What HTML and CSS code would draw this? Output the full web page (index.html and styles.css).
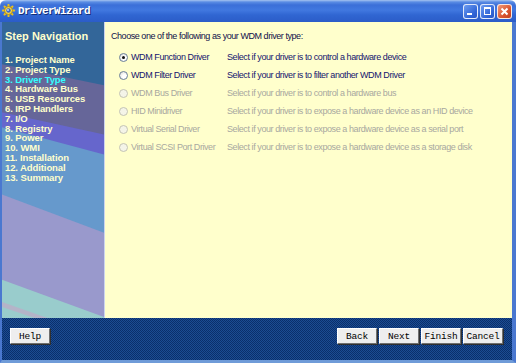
FILE: index.html
```html
<!DOCTYPE html>
<html lang="en">
<head>
    <meta charset="UTF-8">
    <meta name="viewport" content="width=device-width, initial-scale=1.0">
    <title>DriverWizard</title>
    <link rel="stylesheet" href="styles.css">
</head>
<body>
    <div class="window">
        <div class="titlebar">
            <svg class="app-icon" width="13" height="13" viewBox="0 0 13 13">
                <g stroke="#e8c020" stroke-width="2" stroke-linecap="round">
                    <line x1="6.5" y1="0.8" x2="6.5" y2="12.2"/>
                    <line x1="0.8" y1="6.5" x2="12.2" y2="6.5"/>
                    <line x1="2.5" y1="2.5" x2="10.5" y2="10.5"/>
                    <line x1="10.5" y1="2.5" x2="2.5" y2="10.5"/>
                </g>
                <circle cx="6.5" cy="6.5" r="4" fill="#f4d848" stroke="#a88010" stroke-width="0.8"/>
                <circle cx="6.5" cy="6.5" r="2.2" fill="#3a66c8"/>
                <circle cx="6" cy="6" r="0.9" fill="#c8dcff"/>
            </svg>
            <span class="title">DriverWizard</span>
            <div class="controls">
                <span class="ctl ctl-min"></span>
                <span class="ctl ctl-max"></span>
                <span class="ctl ctl-close">
                    <svg width="13" height="13" viewBox="0 0 13 13">
                        <path d="M3.5 3.5 L9.5 9.5 M9.5 3.5 L3.5 9.5" stroke="#fff" stroke-width="2"/>
                    </svg>
                </span>
            </div>
        </div>

        <div class="frame">
            <div class="content">
                <div class="sidebar">
                    <svg class="sidebar-bg" viewBox="0 0 103 295" preserveAspectRatio="none">
                        <rect width="103" height="295" fill="#336699"/>
                        <polygon points="0,42 103,63 103,295 0,295" fill="#666699"/>
                        <polygon points="0,90 103,112 103,295 0,295" fill="#6666cc"/>
                        <polygon points="0,105 103,132 103,295 0,295" fill="#6699cc"/>
                        <polygon points="0,172 103,210 103,295 0,295" fill="#9999cc"/>
                        <polygon points="0,257 103,294 103,295 0,295" fill="#99cccc"/>
                        <polygon points="0,279 46,295 33,295 0,284" fill="#b4b4c8"/>
                    </svg>
                    <h2 class="nav-title">Step Navigation</h2>
                    <ol class="steps">
                        <li>1. Project Name</li>
                        <li>2. Project Type</li>
                        <li class="current">3. Driver Type</li>
                        <li>4. Hardware Bus</li>
                        <li>5. USB Resources</li>
                        <li>6. IRP Handlers</li>
                        <li>7. I/O</li>
                        <li>8. Registry</li>
                        <li>9. Power</li>
                        <li>10. WMI</li>
                        <li>11. Installation</li>
                        <li>12. Additional</li>
                        <li>13. Summary</li>
                    </ol>
                </div>

                <div class="panel">
                    <p class="prompt">Choose one of the following as your WDM driver type:</p>
                    <div class="options">
                        <span class="radio checked"></span>
                        <span class="label">WDM Function Driver</span>
                        <span class="desc">Select if your driver is to control a hardware device</span>

                        <span class="radio"></span>
                        <span class="label">WDM Filter Driver</span>
                        <span class="desc">Select if your driver is to filter another WDM Driver</span>

                        <span class="radio disabled"></span>
                        <span class="label disabled">WDM Bus Driver</span>
                        <span class="desc disabled">Select if your driver is to control a hardware bus</span>

                        <span class="radio disabled"></span>
                        <span class="label disabled">HID Minidriver</span>
                        <span class="desc disabled">Select if your driver is to expose a hardware device as an HID device</span>

                        <span class="radio disabled"></span>
                        <span class="label disabled">Virtual Serial Driver</span>
                        <span class="desc disabled">Select if your driver is to expose a hardware device as a serial port</span>

                        <span class="radio disabled"></span>
                        <span class="label disabled">Virtual SCSI Port Driver</span>
                        <span class="desc disabled">Select if your driver is to expose a hardware device as a storage disk</span>
                    </div>
                </div>
            </div>

            <div class="footer">
                <button class="btn">Help</button>
                <div class="nav-buttons">
                    <button class="btn">Back</button>
                    <button class="btn">Next</button>
                    <button class="btn">Finish</button>
                    <button class="btn">Cancel</button>
                </div>
            </div>
        </div>
    </div>
</body>
</html>
```

FILE: styles.css
```css
body {
    margin: 0;
    background-color: #ffffff;
    font-family: "Liberation Sans", Arial, sans-serif;
}

.window {
    width: 516px;
    height: 363px;
    display: flex;
    flex-direction: column;
}

/* title bar */
.titlebar {
    height: 22px;
    display: flex;
    align-items: center;
    padding: 0 4px 0 2px;
    border-radius: 6px 6px 0 0;
    background: linear-gradient(to bottom, #a6c4f0 0, #5a8ce4 2px, #3b6fd8 5px, #4178e0 10px, #3066d2 15px, #2b5cc8 100%);
}

.app-icon {
    flex: none;
    margin-top: -1px;
}

.title {
    margin-left: 3px;
    color: #ffffff;
    font-family: "Liberation Mono", "Courier New", monospace;
    font-weight: bold;
    font-size: 11px;
    letter-spacing: -0.6px;
    text-shadow: 1px 1px 0 #142f78;
}

.controls {
    margin-left: auto;
    display: flex;
    gap: 2px;
}

.ctl {
    position: relative;
    width: 13px;
    height: 13px;
    border: 1px solid rgba(255, 255, 255, 0.85);
    border-radius: 3px;
    background: linear-gradient(135deg, #6d9cf0, #2f64d6 70%, #2a58c4);
}

.ctl-min::after {
    content: "";
    position: absolute;
    left: 3px;
    top: 8px;
    width: 5px;
    height: 2px;
    background-color: #ffffff;
}

.ctl-max::after {
    content: "";
    position: absolute;
    left: 3px;
    top: 2px;
    width: 5px;
    height: 5px;
    border: 1px solid #ffffff;
    border-top-width: 2px;
}

.ctl-close {
    background: linear-gradient(135deg, #f09a78, #d9542f 60%, #c2401e);
}

.ctl-close svg {
    display: block;
}

/* frame */
.frame {
    flex: 1;
    display: flex;
    flex-direction: column;
    border-left: 2px solid #4a78d0;
    border-right: 4px solid #4a78d0;
    border-bottom: 3px solid #6f9bd8;
}

.content {
    height: 296px;
    display: flex;
}

/* sidebar */
.sidebar {
    position: relative;
    width: 103px;
    padding: 0 0 0 3px;
    box-sizing: border-box;
    border-right: 1px solid #ccd4ee;
    overflow: hidden;
}

.sidebar-bg {
    position: absolute;
    left: 0;
    top: 0;
    width: 100%;
    height: 100%;
}

.nav-title {
    position: relative;
    margin: 8px 0 0;
    color: #ffffcc;
    font-size: 11px;
    font-weight: bold;
    line-height: 13px;
}

.steps {
    position: relative;
    list-style: none;
    margin: 12px 0 0;
    padding: 0;
    color: #ffffcc;
    font-size: 9.5px;
    font-weight: bold;
    line-height: 9.8px;
    letter-spacing: -0.1px;
}

.steps .current {
    color: #33ffff;
}

/* main panel */
.panel {
    flex: 1;
    background-color: #ffffcc;
    padding: 9px 0 0 6px;
}

.prompt {
    margin: 0;
    color: #10104a;
    font-size: 9px;
    line-height: 11px;
    letter-spacing: -0.45px;
}

.options {
    display: grid;
    grid-template-columns: 12px 96px auto;
    grid-auto-rows: 18px;
    align-items: center;
    margin: 6px 0 0 8px;
    font-size: 9px;
    letter-spacing: -0.42px;
    color: #14146e;
}

.radio {
    width: 7px;
    height: 7px;
    border: 1px solid #6a7f98;
    border-radius: 50%;
    background: radial-gradient(circle at 65% 65%, #ffffff 30%, #d8d8d0 100%);
    position: relative;
}

.radio.checked::after {
    content: "";
    position: absolute;
    left: 2px;
    top: 2px;
    width: 3px;
    height: 3px;
    border-radius: 50%;
    background-color: #101010;
}

.radio.disabled {
    border-color: #c4c4b4;
    background: #f4f4e8;
}

.label,
.desc {
    white-space: nowrap;
}

.disabled {
    color: #a8a8a0;
}

/* footer */
.footer {
    flex: 1;
    display: flex;
    justify-content: space-between;
    align-items: flex-start;
    padding: 10px 9px 0 8px;
    background-color: #0e3a7e;
    background-image: repeating-conic-gradient(#1c4c92 0 25%, #0a2f6c 0 50%);
    background-size: 2px 2px;
}

.nav-buttons {
    display: flex;
    gap: 2px;
}

.btn {
    width: 40px;
    height: 16px;
    padding: 0;
    font-family: "Liberation Mono", "Courier New", monospace;
    font-size: 9.5px;
    letter-spacing: -0.2px;
    color: #000000;
    background-color: #eeeeee;
    border: 1px solid;
    border-color: #ffffff #707070 #707070 #ffffff;
    box-shadow: 1px 1px 0 #303030;
}
```
